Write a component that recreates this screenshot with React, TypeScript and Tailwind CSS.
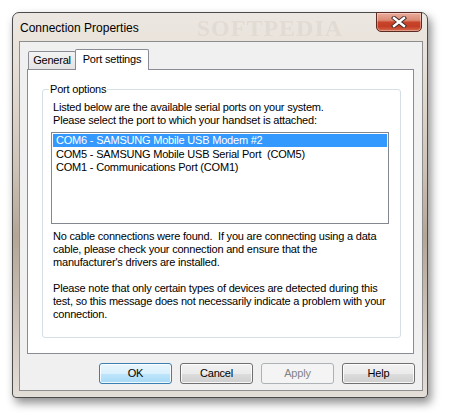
import React from "react";

function CloseButton() {
  return (
    <div className="shrink-0 w-[46px] h-[20px] -mt-px rounded-b-[5px] border border-[#5b2a20] bg-[linear-gradient(to_bottom,#e9ad9c_0%,#dc8a74_40%,#c8432a_52%,#c23e25_75%,#d86a4c_100%)] shadow-[inset_0_0_0_1px_rgba(255,255,255,0.35)] flex items-center justify-center">
      <svg width="16" height="12" viewBox="0 0 16 12">
        <path d="M3 2 L13 10 M13 2 L3 10" stroke="#3a2a28" strokeWidth="4.2" strokeLinecap="square" />
        <path d="M3 2 L13 10 M13 2 L3 10" stroke="#ffffff" strokeWidth="2.4" strokeLinecap="square" />
      </svg>
    </div>
  );
}

function Btn({ label, variant }: { label: string; variant?: "default" | "disabled" }) {
  if (variant === "default") {
    return (
      <div className="w-[73px] h-[21px] rounded-[3px] border border-[#3c7fb1] bg-[linear-gradient(to_bottom,#eaf6fd_0%,#d9f0fc_50%,#bee6fd_51%,#a7d9f5_100%)] shadow-[inset_0_0_0_1px_rgba(255,255,255,0.8)] flex items-center justify-center">
        {label}
      </div>
    );
  }
  if (variant === "disabled") {
    return (
      <div className="w-[73px] h-[21px] rounded-[3px] border border-[#adb2b5] bg-[#f4f4f4] text-[#838383] flex items-center justify-center">
        {label}
      </div>
    );
  }
  return (
    <div className="w-[73px] h-[21px] rounded-[3px] border border-[#707070] bg-[linear-gradient(to_bottom,#f2f2f2_0%,#ebebeb_50%,#dddddd_51%,#cfcfcf_100%)] shadow-[inset_0_0_0_1px_rgba(255,255,255,0.8)] flex items-center justify-center">
      {label}
    </div>
  );
}

export default function App() {
  return (
    <div className="w-[449px] h-[419px] bg-white pt-[12px] pl-[12px] font-['Liberation_Sans',Arial,sans-serif] text-[11px] leading-[13px] tracking-[-0.2px] text-black">
      <div className="w-[416px] h-[386px] flex flex-col rounded-t-[7px] rounded-b-[4px] border border-[#4b4b4b] bg-[linear-gradient(to_bottom,#ece7e1_0%,#e8e1d9_12%,#cfc3b7_40%,#b4a596_58%,#cdc3b9_80%,#e4ded8_100%)] shadow-[3px_5px_10px_rgba(0,0,0,0.45)]">
        <div className="h-[28px] flex items-start justify-between pl-[7px] pr-[5px]">
          <div className="flex items-start whitespace-nowrap">
            <span className="shrink-0 mt-[7px] font-['Liberation_Sans',sans-serif] text-[12px] leading-[16px] tracking-normal text-black">Connection Properties</span>
            <span className="shrink-0 ml-[58px] mt-[3px] font-['Liberation_Serif',serif] font-bold text-[24px] leading-[24px] tracking-[1px] text-[#e2dbd3] blur-[0.6px]">SOFTPEDIA</span>
          </div>
          <CloseButton />
        </div>
        <div className="ml-[6px] w-[404px] h-[350px] border border-[#8e8e8e] bg-[#f0f0f0] flex flex-col">
          <div className="h-[27px] flex items-end pl-[8px]">
            <div className="w-[48px] h-[18px] -mr-px rounded-t-[2px] border border-b-0 border-[#898c95] bg-[linear-gradient(to_bottom,#f3f3f3,#e3e3e3)] flex justify-center pt-[2px]">
              General
            </div>
            <div className="relative z-10 w-[74px] h-[21px] -mb-px rounded-t-[2px] border border-b-0 border-[#898c95] bg-white flex justify-center pt-[3px]">
              Port settings
            </div>
          </div>
          <div className="ml-[7px] w-[387px] h-[285px] border border-[#898c95] bg-white pl-[14px] pt-[19px]">
            <div className="relative w-[359px] h-[249px] rounded-[3px] border border-[#d5dfe5] pl-[10px] pt-[11px]">
              <span className="absolute left-[6px] -top-[7px] bg-white px-[1px]">Port options</span>
              <div>Listed below are the available serial ports on your system.</div>
              <div>Please select the port to which your handset is attached:</div>
              <div className="-ml-[2px] mt-[5px] w-[338px] h-[92px] border border-[#828790] bg-white p-px">
                <div className="h-[13px] bg-[#3399ff] text-white pl-[3px]">COM6 - SAMSUNG Mobile USB Modem #2</div>
                <div className="h-[14px] pt-px pl-[3px] whitespace-pre">COM5 - SAMSUNG Mobile USB Serial Port  (COM5)</div>
                <div className="h-[13px] pl-[3px]">COM1 - Communications Port (COM1)</div>
              </div>
              <div className="mt-[6px] whitespace-pre">
                {"No cable connections were found.  If you are connecting using a data"}
                <br />
                {"cable, please check your connection and ensure that the"}
                <br />
                {"manufacturer's drivers are installed."}
              </div>
              <div className="mt-[13px]">
                Please note that only certain types of devices are detected during this
                <br />
                test, so this message does not necessarily indicate a problem with your
                <br />
                connection.
              </div>
            </div>
          </div>
          <div className="mt-[9px] flex justify-end gap-[8px] pr-[7px]">
            <Btn label="OK" variant="default" />
            <Btn label="Cancel" />
            <Btn label="Apply" variant="disabled" />
            <Btn label="Help" />
          </div>
        </div>
      </div>
    </div>
  );
}
